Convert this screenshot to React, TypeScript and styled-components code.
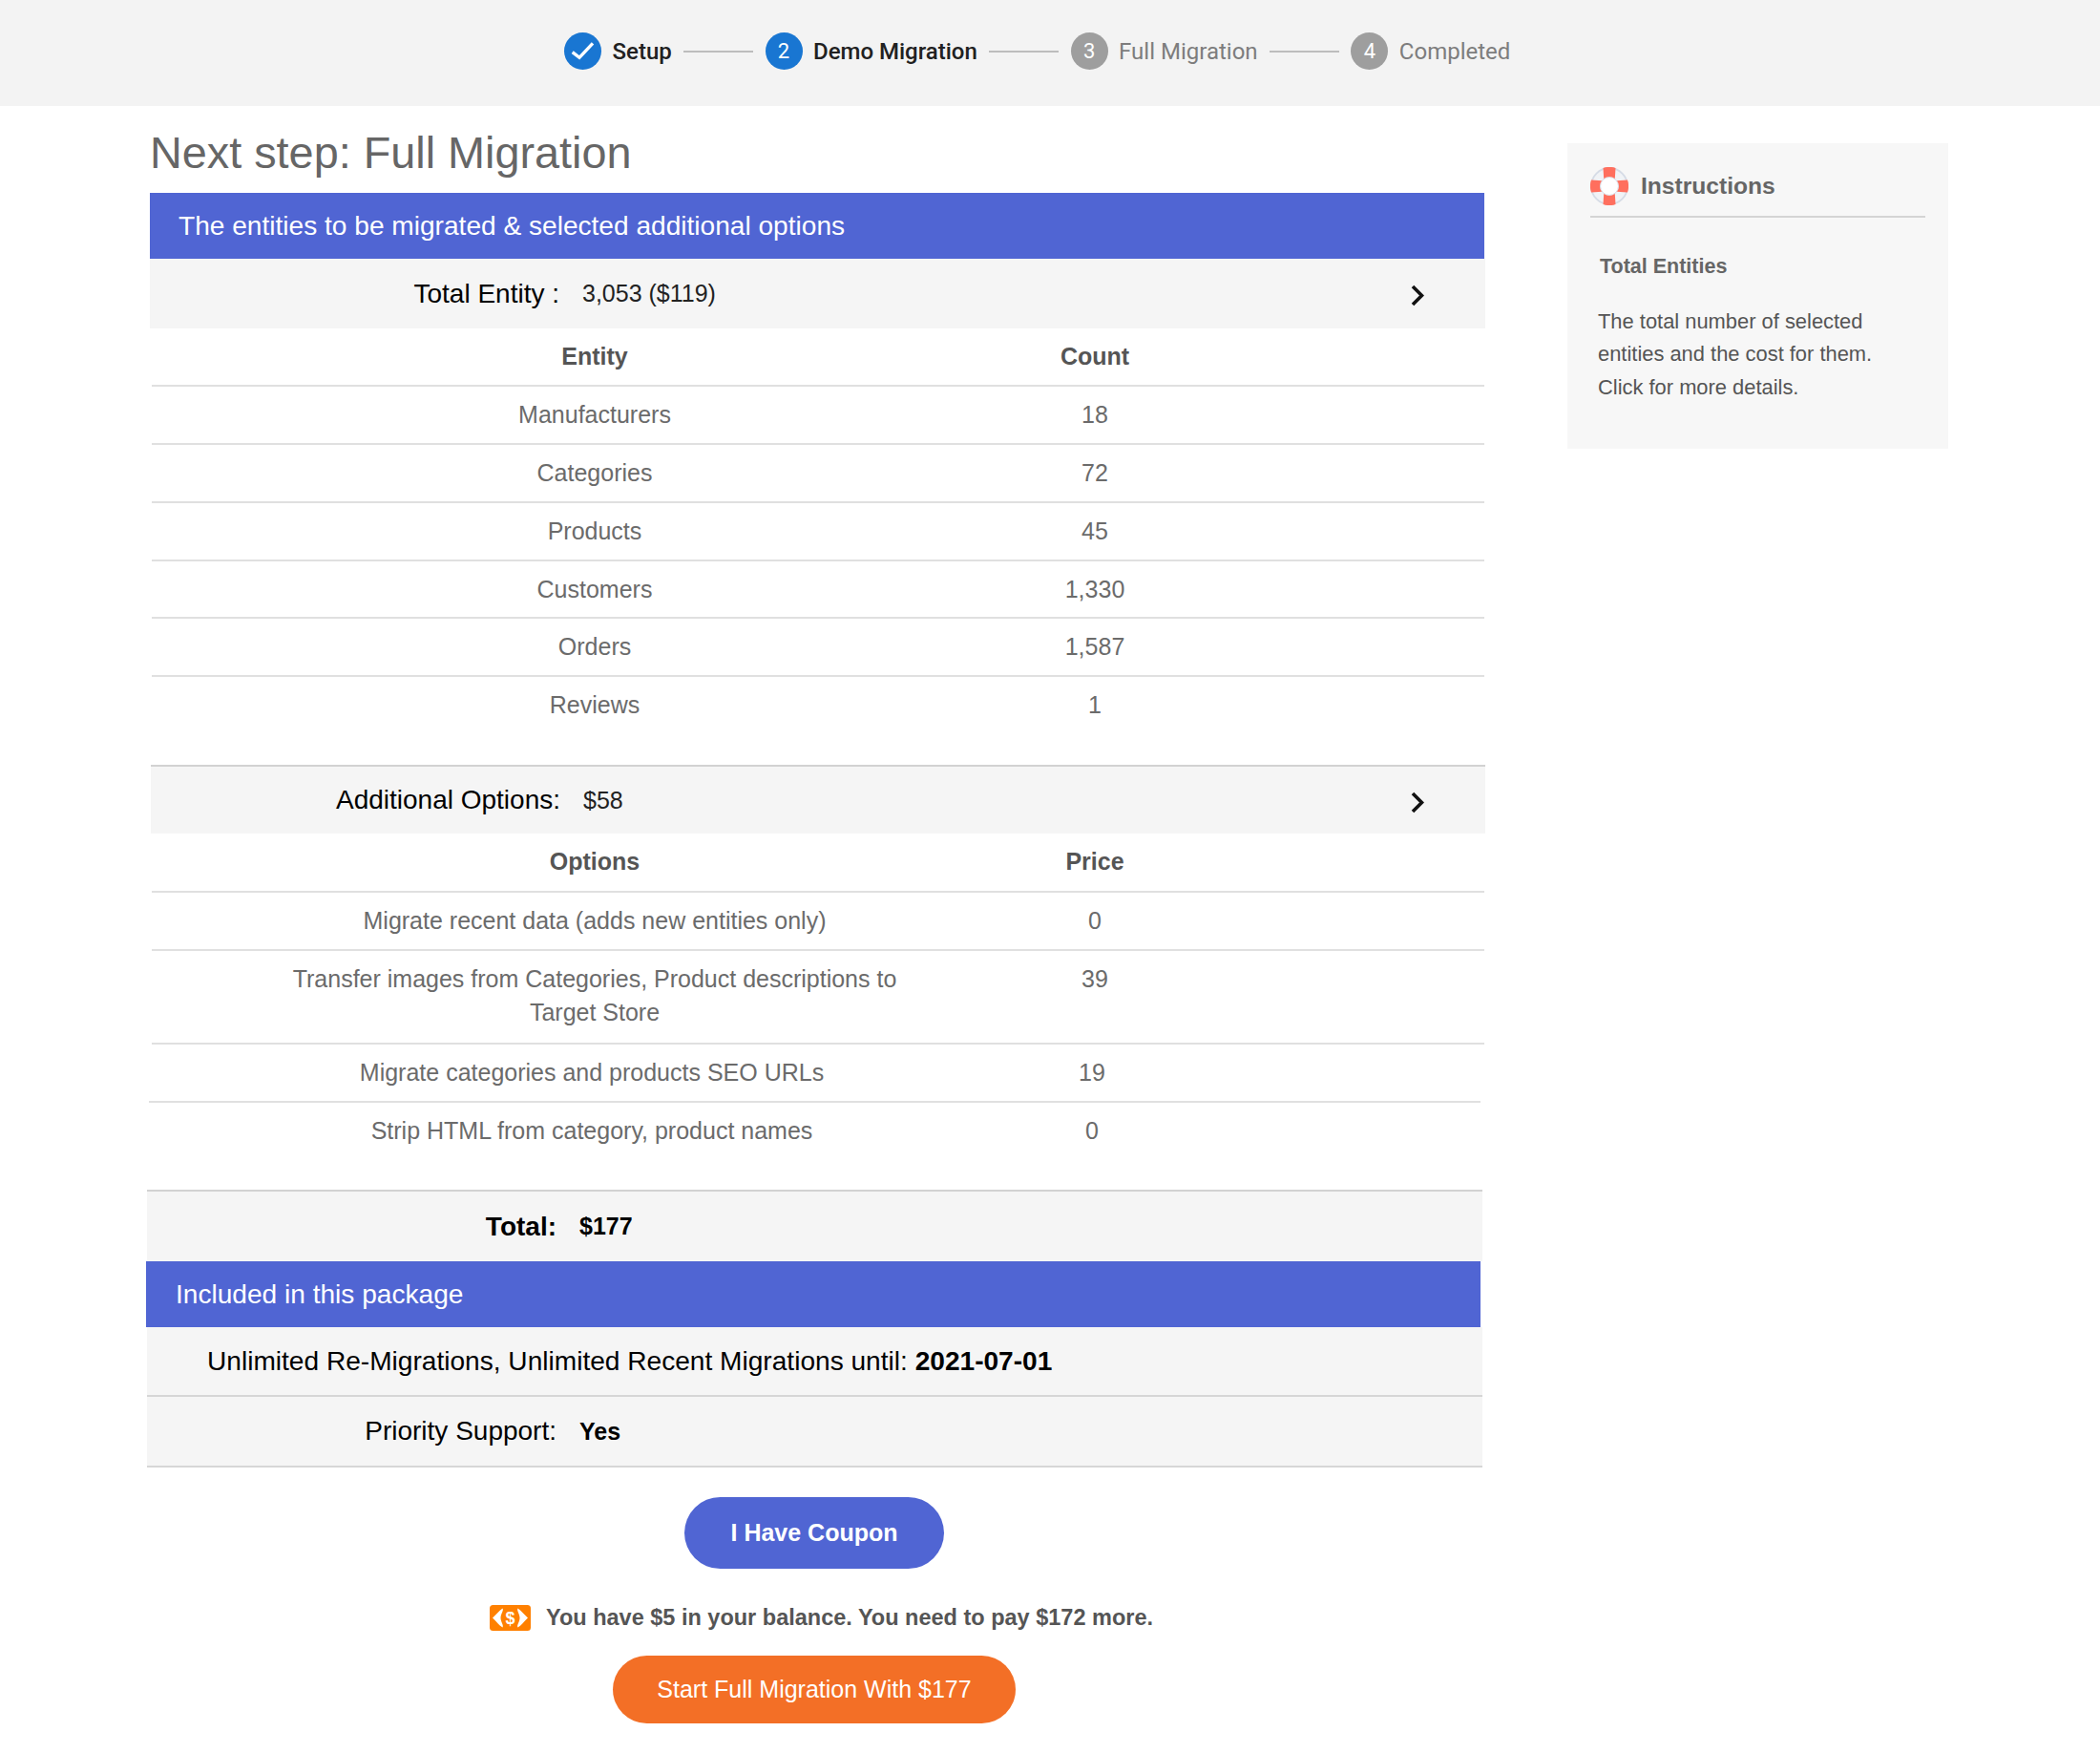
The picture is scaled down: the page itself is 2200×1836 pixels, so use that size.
import React from "react";
import styled, { createGlobalStyle } from "styled-components";

const GlobalStyle = createGlobalStyle`
  html, body {
    margin: 0;
    padding: 0;
    background: #fff;
  }
  body {
    font-family: "Liberation Sans", Arial, sans-serif;
    color: #666;
  }
`;

const Header = styled.header`
  height: 111px;
  padding: 0 0 4px 591px;
  box-sizing: border-box;
  background: #f3f3f3;
  display: flex;
  align-items: center;
  font-family: Roboto, "Liberation Sans", sans-serif;
`;

const Step = styled.div`
  display: flex;
  align-items: center;
  gap: 11.5px;
`;

const StepCircle = styled.span<{ $active?: boolean }>`
  width: 39px;
  height: 39px;
  border-radius: 50%;
  background: ${(p) => (p.$active ? "#1976d2" : "#9e9e9e")};
  color: #fff;
  display: flex;
  align-items: center;
  justify-content: center;
  font-size: 22px;
`;

const StepLabel = styled.span<{ $active?: boolean }>`
  font-size: 24px;
  font-weight: ${(p) => (p.$active ? 500 : 400)};
  color: ${(p) => (p.$active ? "#212121" : "#7d7d7d")};
`;

const StepLine = styled.span`
  width: 73px;
  height: 2px;
  margin: 0 12.4px;
  background: #bdbdbd;
`;

const Body = styled.div`
  display: flex;
  align-items: flex-start;
  padding-left: 152px;
`;

const Main = styled.main`
  width: 1404px;
  flex: none;
`;

const Title = styled.h1`
  margin: 0 0 24px 5px;
  padding-top: 23px;
  height: 67px;
  box-sizing: border-box;
  line-height: 52px;
  font-size: 46.8px;
  font-weight: 400;
  color: #666;
`;

const BlueBar = styled.div<{ $left: number; $right: number; $height: number; $pad: number }>`
  margin: 0 ${(p) => p.$right}px 0 ${(p) => p.$left}px;
  height: ${(p) => p.$height}px;
  padding-left: ${(p) => p.$pad}px;
  background: #5065d3;
  color: #fff;
  font-size: 28.1px;
  display: flex;
  align-items: center;
`;

const SummaryRow = styled.div<{ $left: number; $right: number; $height: number; $top?: boolean; $bottom?: boolean }>`
  margin: 0 ${(p) => p.$right}px 0 ${(p) => p.$left}px;
  height: ${(p) => p.$height}px;
  box-sizing: border-box;
  background: #f5f5f5;
  display: flex;
  align-items: center;
  color: #000;
  border-top: ${(p) => (p.$top ? "2px solid #d2d2d2" : "none")};
  border-bottom: ${(p) => (p.$bottom ? "2px solid #d6d6d6" : "none")};
`;

const SummaryLabel = styled.span<{ $bold?: boolean }>`
  width: 429px;
  flex: none;
  text-align: right;
  font-size: 28px;
  font-weight: ${(p) => (p.$bold ? 700 : 400)};
`;

const SummaryValue = styled.span<{ $bold?: boolean }>`
  margin-left: 24px;
  font-size: 25px;
  font-weight: ${(p) => (p.$bold ? 700 : 400)};
  color: ${(p) => (p.$bold ? "#000" : "#222")};
`;

const FullLine = styled.span`
  padding-left: 63px;
  font-size: 28.1px;
  & > b {
    font-weight: 700;
  }
`;

const Chevron = styled.svg`
  margin-left: auto;
  margin-right: 64px;
  margin-top: 4px;
  flex: none;
`;

const Table = styled.div<{ $gap: number }>`
  margin-bottom: ${(p) => p.$gap}px;
`;

const Row = styled.div<{ $inset?: boolean; $height: number; $plain?: boolean }>`
  margin: 0 ${(p) => (p.$inset ? 5 : 1)}px 0 ${(p) => (p.$inset ? 4 : 7)}px;
  height: ${(p) => p.$height}px;
  box-sizing: border-box;
  padding: 12px 0 0 124px;
  display: grid;
  grid-template-columns: 680px 368px;
  align-items: start;
  border-bottom: ${(p) => (p.$plain ? "none" : "2px solid #e0e0e0")};
`;

const Cell = styled.div<{ $head?: boolean }>`
  text-align: center;
  font-size: 25px;
  line-height: 35px;
  font-weight: ${(p) => (p.$head ? 700 : 400)};
  color: ${(p) => (p.$head ? "#555" : "#6b6b6b")};
`;

const Actions = styled.div`
  display: flex;
  flex-direction: column;
  align-items: center;
  padding: 31px 2px 31px 0;
`;

const PillButton = styled.button<{ $color: string; $w: number; $h: number; $bold?: boolean }>`
  width: ${(p) => p.$w}px;
  height: ${(p) => p.$h}px;
  border: none;
  padding: 0;
  border-radius: ${(p) => p.$h / 2}px;
  background: ${(p) => p.$color};
  color: #fff;
  font-family: inherit;
  font-size: 25px;
  font-weight: ${(p) => (p.$bold ? 700 : 400)};
`;

const Balance = styled.div`
  margin: 37px 0 26px 15px;
  height: 28px;
  display: flex;
  align-items: center;
  gap: 16px;
  font-size: 23.5px;
  font-weight: 700;
  color: #555;
`;

const Side = styled.aside`
  margin: 39px 0 0 86px;
  width: 399px;
  height: 320px;
  box-sizing: border-box;
  padding: 25px 24px 0;
  background: #f7f7f7;
`;

const SideHead = styled.div`
  display: flex;
  align-items: center;
  gap: 13px;
  padding-bottom: 11px;
  border-bottom: 2px solid #d4d4d4;
  font-size: 24.6px;
  font-weight: 700;
  color: #666;
`;

const SideTitle = styled.h3`
  margin: 34px 0 0 10px;
  font-size: 21.5px;
  line-height: 34px;
  font-weight: 700;
  color: #666;
`;

const SideText = styled.p`
  margin: 24px 0 0 8px;
  font-size: 21.9px;
  line-height: 34.4px;
  color: #555;
`;

const steps = [
  { label: "Setup", active: true, done: true },
  { label: "Demo Migration", active: true },
  { label: "Full Migration" },
  { label: "Completed" },
];

const entities = [
  ["Manufacturers", "18"],
  ["Categories", "72"],
  ["Products", "45"],
  ["Customers", "1,330"],
  ["Orders", "1,587"],
  ["Reviews", "1"],
];

const ChevronIcon = () => (
  <Chevron width="14" height="23" viewBox="0 0 14 23">
    <path d="M2 2l9.5 9.5L2 21" fill="none" stroke="#111" strokeWidth="3.6" />
  </Chevron>
);

const LifeRing = () => (
  <svg width="40" height="40" viewBox="0 0 40 40">
    <circle cx="20" cy="20" r="14.5" fill="none" stroke="#f1f3f6" strokeWidth="10" />
    <circle cx="20" cy="20" r="19" fill="none" stroke="#d6dce6" strokeWidth="1.8" />
    <circle cx="20" cy="20" r="9.5" fill="#fff" stroke="#d6dce6" strokeWidth="1" />
    {[0, 90, 180, 270].map((deg) => (
      <path
        key={deg}
        d="M13.5 1A20 20 0 0 1 26.5 1L25.8 12A10 10 0 0 0 14.2 12Z"
        fill="#ff6f5e"
        transform={`rotate(${deg} 20 20)`}
      />
    ))}
  </svg>
);

const MoneyIcon = () => (
  <svg width="43" height="27" viewBox="0 0 43 27">
    <rect width="43" height="27" rx="3.5" fill="#ff8000" />
    <path d="M13.5 3.5C9.5 6 7 10 3 13.5 7 17 9.5 21 13.5 23.5 15 21 11.5 18 11.5 13.5 11.5 9 15 6 13.5 3.5Z" fill="#fff" />
    <path d="M29.5 3.5C33.5 6 36 10 40 13.5 36 17 33.5 21 29.5 23.5 28 21 31.5 18 31.5 13.5 31.5 9 28 6 29.5 3.5Z" fill="#fff" />
    <text x="21.5" y="20" textAnchor="middle" fontSize="18" fontWeight="700" fill="#fff" fontFamily="Liberation Sans, sans-serif">
      $
    </text>
  </svg>
);

export default function App() {
  return (
    <>
      <GlobalStyle />
      <Header>
        {steps.map((step, i) => (
          <React.Fragment key={step.label}>
            {i > 0 && <StepLine />}
            <Step>
              <StepCircle $active={step.active}>
                {step.done ? (
                  <svg width="39" height="39" viewBox="0 0 39 39">
                    <path d="M8.7 20.7l7.3 5.6L30 11.3" fill="none" stroke="#fff" strokeWidth="3.4" />
                  </svg>
                ) : (
                  i + 1
                )}
              </StepCircle>
              <StepLabel $active={step.active}>{step.label}</StepLabel>
            </Step>
          </React.Fragment>
        ))}
      </Header>
      <Body>
        <Main>
          <Title>Next step: Full Migration</Title>
          <BlueBar $left={5} $right={1} $height={69} $pad={30}>
            The entities to be migrated &amp; selected additional options
          </BlueBar>
          <SummaryRow $left={5} $right={0} $height={73}>
            <SummaryLabel>Total Entity :</SummaryLabel>
            <SummaryValue>3,053 ($119)</SummaryValue>
            <ChevronIcon />
          </SummaryRow>
          <Table $gap={31}>
            <Row $height={60.9}>
              <Cell $head>Entity</Cell>
              <Cell $head>Count</Cell>
            </Row>
            {entities.map(([name, count], i) => (
              <Row key={name} $height={60.9} $plain={i === entities.length - 1}>
                <Cell>{name}</Cell>
                <Cell>{count}</Cell>
              </Row>
            ))}
          </Table>
          <SummaryRow $left={6} $right={0} $height={72} $top>
            <SummaryLabel>Additional Options:</SummaryLabel>
            <SummaryValue>$58</SummaryValue>
            <ChevronIcon />
          </SummaryRow>
          <Table $gap={30}>
            <Row $height={62}>
              <Cell $head>Options</Cell>
              <Cell $head>Price</Cell>
            </Row>
            <Row $height={61}>
              <Cell>Migrate recent data (adds new entities only)</Cell>
              <Cell>0</Cell>
            </Row>
            <Row $height={98}>
              <Cell>Transfer images from Categories, Product descriptions to Target Store</Cell>
              <Cell>39</Cell>
            </Row>
            <Row $height={61} $inset>
              <Cell>Migrate categories and products SEO URLs</Cell>
              <Cell>19</Cell>
            </Row>
            <Row $height={61} $inset $plain>
              <Cell>Strip HTML from category, product names</Cell>
              <Cell>0</Cell>
            </Row>
          </Table>
          <SummaryRow $left={2} $right={3} $height={75} $top>
            <SummaryLabel $bold>Total:</SummaryLabel>
            <SummaryValue $bold>$177</SummaryValue>
          </SummaryRow>
          <BlueBar $left={1} $right={5} $height={69} $pad={31}>
            Included in this package
          </BlueBar>
          <SummaryRow $left={2} $right={3} $height={73} $bottom>
            <FullLine>
              Unlimited Re-Migrations, Unlimited Recent Migrations until: <b>2021-07-01</b>
            </FullLine>
          </SummaryRow>
          <SummaryRow $left={2} $right={3} $height={74} $bottom>
            <SummaryLabel>Priority Support:</SummaryLabel>
            <SummaryValue $bold>Yes</SummaryValue>
          </SummaryRow>
          <Actions>
            <PillButton $color="#5065d3" $w={272} $h={75} $bold>
              I Have Coupon
            </PillButton>
            <Balance>
              <MoneyIcon />
              You have $5 in your balance. You need to pay $172 more.
            </Balance>
            <PillButton $color="#f36f26" $w={422} $h={71}>
              Start Full Migration With $177
            </PillButton>
          </Actions>
        </Main>
        <Side>
          <SideHead>
            <LifeRing />
            Instructions
          </SideHead>
          <SideTitle>Total Entities</SideTitle>
          <SideText>
            The total number of selected
            <br />
            entities and the cost for them.
            <br />
            Click for more details.
          </SideText>
        </Side>
      </Body>
    </>
  );
}
